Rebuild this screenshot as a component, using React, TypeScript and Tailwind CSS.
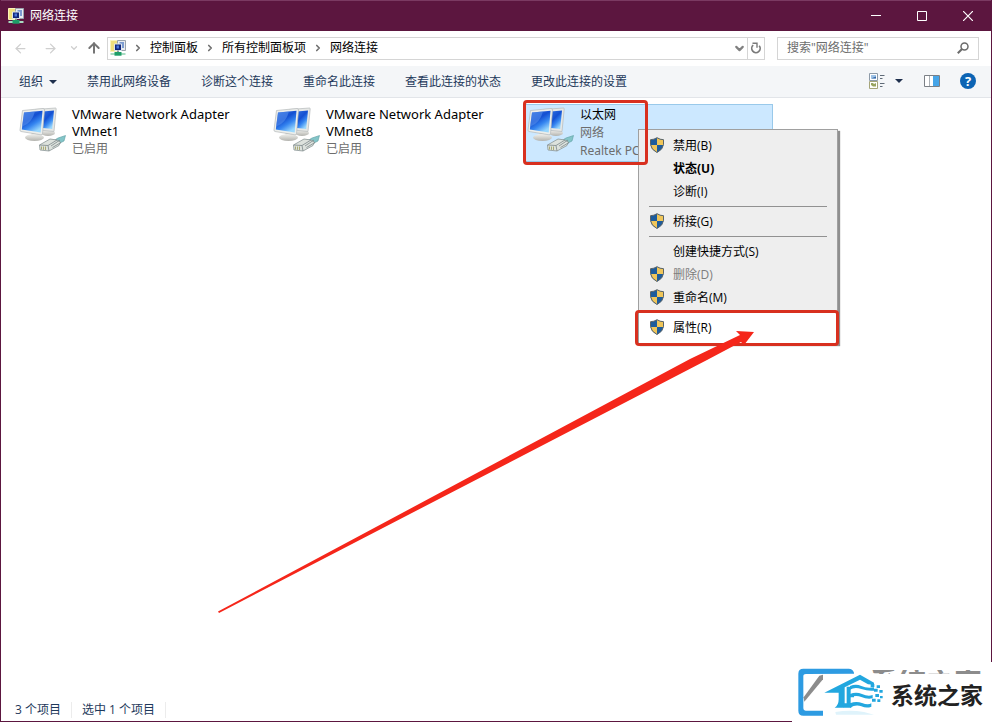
import { Fragment, type ReactNode } from 'react'
import { ArrowLeft, ArrowRight, ArrowUp, ChevronDown, ChevronRight } from 'lucide-react'

interface Connection {
  title: string[]
  details: string[]
}

interface MenuEntry {
  label: string
  shield?: boolean
  bold?: boolean
  disabled?: boolean
}

const CRUMBS = ['控制面板', '所有控制面板项', '网络连接']

const COMMANDS = [
  '禁用此网络设备',
  '诊断这个连接',
  '重命名此连接',
  '查看此连接的状态',
  '更改此连接的设置',
]

const CONNECTIONS: Connection[] = [
  { title: ['VMware Network Adapter', 'VMnet1'], details: ['已启用'] },
  { title: ['VMware Network Adapter', 'VMnet8'], details: ['已启用'] },
]

const MENU_GROUPS: MenuEntry[][] = [
  [
    { label: '禁用(B)', shield: true },
    { label: '状态(U)', bold: true },
    { label: '诊断(I)' },
  ],
  [{ label: '桥接(G)', shield: true }],
  [
    { label: '创建快捷方式(S)' },
    { label: '删除(D)', shield: true, disabled: true },
    { label: '重命名(M)', shield: true },
  ],
]

function NetworkIcon(): ReactNode {
  return (
    <svg viewBox="0 0 16 16" className="w-4 h-4 shrink-0" aria-hidden="true">
      <path d="M0.5 0.5h7v11h-7z" fill="#f1df7c" stroke="#fbf3bb" />
      <path d="M7.5 0.5h8v10h-8z" fill="#e9ecf0" stroke="#9aa3ad" />
      <path d="M9.500 2h4.500v6h-4.500z" fill="#7c9bd0" />
      <path d="M4.500 4h7v6.500h-7z" fill="#12267a" stroke="#dfe6ee" />
      <path d="M6.500 5.500h2.500v3h-2.500z" fill="#4a74d8" />
      <path d="M7 10.500h2v2h-2z" fill="#8c959c" />
      <path d="M0.500 14h15" stroke="#a8dcc2" strokeWidth="2" />
      <path d="M4.500 12h7v3.700h-7z" fill="#1e9e68" />
    </svg>
  )
}

/** Two monitors with an RJ45 plug in front of them. */
function ConnectionIcon(): ReactNode {
  return (
    <svg viewBox="0 0 48 48" className="w-12 h-12 shrink-0" aria-hidden="true">
      <defs>
        <linearGradient id="screen" x1="0" y1="0" x2="0.6" y2="1">
          <stop offset="0" stopColor="#2f6fe0" />
          <stop offset="0.45" stopColor="#1450d2" />
          <stop offset="0.7" stopColor="#3585f0" />
          <stop offset="1" stopColor="#9ad8fd" />
        </linearGradient>
        <linearGradient id="stand" x1="0" y1="0" x2="0" y2="1">
          <stop offset="0" stopColor="#f2f2ee" />
          <stop offset="1" stopColor="#b3b3ae" />
        </linearGradient>
      </defs>
      <ellipse cx="29" cy="27" rx="7" ry="3" fill="url(#stand)" />
      <path d="M16 3.500 36.500 2Q37.300 2 37.200 3L35 25.500 20 24z" fill="#e6e8e6" stroke="#b4b9ba" strokeWidth="0.700" />
      <path d="M24 5.500 35 4.500 33.200 23 24 22z" fill="url(#screen)" />
      <path d="M13 25 20 26 19 32H12z" fill="#d0d0cc" />
      <ellipse cx="15.500" cy="31.500" rx="9.500" ry="3.500" fill="url(#stand)" />
      <path d="M3.500 4.500 24 2.500Q25.500 2.500 25.500 4L23.500 28Q23.300 29 22 28.800L2 25.500Q0.800 25.200 1 24z" fill="#eceeeb" stroke="#b4b9ba" strokeWidth="0.700" />
      <path d="M5 6.500 23.500 4.700 21.700 26.500 2.800 23.500z" fill="url(#screen)" />
      <path d="M5 6.500 16 5.400Q13 17 3.200 20.500z" fill="#5b93ec" opacity="0.550" />
      <path d="M34 35 39 32 46.500 29.500 45 35 39 38z" fill="#83c5c8" stroke="#5c9da3" strokeWidth="0.600" />
      <path d="M20.500 39 31 33 38 34 41.500 36 40 39.500 30 45 21 44z" fill="#dde2dd" stroke="#8a9596" strokeWidth="0.800" />
      <path d="M20.500 39 29 39.500 30 45M29 39.500 38 34M32 40 41 34M33.500 41.500 42 36.500" fill="none" stroke="#7c888a" strokeWidth="0.800" />
      <path d="M22.500 40.500v3M24.500 40.500v3.300M26.500 40.500v3.500" stroke="#a3a46a" strokeWidth="0.900" />
    </svg>
  )
}

function ShieldIcon(): ReactNode {
  return (
    <svg viewBox="0 0 16 16" className="w-4 h-4" aria-hidden="true">
      <path d="M8 0.700Q11 2.700 14.500 2.700V7.500Q14 12.500 8 15.500Q2 12.500 1.500 7.500V2.700Q5 2.700 8 0.700z" fill="#1d5c9c" />
      <path d="M8 0.700Q11 2.700 14.500 2.700V8H8z" fill="#f0c659" />
      <path d="M1.500 8H8V15.500Q2.500 12.700 1.500 8z" fill="#f0c659" />
      <path d="M8 0.700Q11 2.700 14.500 2.700V7.500Q14 12.500 8 15.500Q2 12.500 1.500 7.500V2.700Q5 2.700 8 0.700z" fill="none" stroke="#5b6468" />
    </svg>
  )
}

function Caret(): ReactNode {
  return (
    <svg viewBox="0 0 8 4" className="w-2 h-1" aria-hidden="true">
      <path d="M0 0h8L4 4z" fill="#1e2f4d" />
    </svg>
  )
}

function TitleBar(): ReactNode {
  return (
    <header className="flex items-center h-[31px] pl-[7px] bg-[#5c163f] border-t border-[#7b3a62] text-white">
      <NetworkIcon />
      <h1 className="flex-1 pl-1.5 text-xs">网络连接</h1>
      <button type="button" aria-label="最小化" className="w-[46px] h-[30px] flex items-center justify-center">
        <svg viewBox="0 0 10 10" className="w-2.5 h-2.5"><path d="M0 4.500h10" stroke="white" /></svg>
      </button>
      <button type="button" aria-label="最大化" className="w-[46px] h-[30px] flex items-center justify-center">
        <svg viewBox="0 0 10 10" className="w-2.5 h-2.5"><path d="M0.500 0.500h9v9h-9z" fill="none" stroke="white" /></svg>
      </button>
      <button type="button" aria-label="关闭" className="w-[46px] h-[30px] flex items-center justify-center">
        <svg viewBox="0 0 10 10" className="w-2.5 h-2.5"><path d="M0 0 10 10M10 0 0 10" stroke="white" strokeWidth="1.200" /></svg>
      </button>
    </header>
  )
}

function AddressRow(): ReactNode {
  return (
    <div className="flex items-center h-[35px] pr-3 pb-px">
      <nav className="flex items-center w-[106px] shrink-0 pl-3 text-[#cfcfcf]" aria-label="导航">
        <button type="button" aria-label="后退" className="w-[30px]"><ArrowLeft className="w-[15px] h-[15px]" strokeWidth={2} /></button>
        <button type="button" aria-label="前进" className="w-[26px]"><ArrowRight className="w-[15px] h-[15px]" strokeWidth={2} /></button>
        <button type="button" aria-label="最近位置" className="w-[17px]"><ChevronDown className="w-2.5 h-2.5" strokeWidth={3} /></button>
        <button type="button" aria-label="上移" className="text-[#757575]"><ArrowUp className="w-4 h-4" strokeWidth={3} /></button>
      </nav>
      <div className="flex flex-1 items-center h-[23px] border border-[#d5d5d5] pl-0.5">
        <NetworkIcon />
        <ol className="flex flex-1 items-center text-black">
          {CRUMBS.map((crumb) => (
            <li key={crumb} className="flex items-center">
              <span className="w-6 flex justify-center">
                <ChevronRight className="w-2.5 h-2.5 text-[#6f6f6f]" strokeWidth={4} />
              </span>
              <a href="#" className="pb-px">{crumb}</a>
            </li>
          ))}
        </ol>
        <button type="button" aria-label="历史记录" className="w-[15px] flex justify-center text-[#808080]">
          <ChevronDown className="w-[13px] h-[13px]" strokeWidth={4} />
        </button>
        <button type="button" aria-label="刷新" className="w-[17px] h-full border-l border-[#d5d5d5] flex items-center justify-center">
          <svg viewBox="0 0 12 12" className="w-3 h-3" aria-hidden="true">
            <path d="M3.200 3.200A4.200 4.200 0 1 0 9.200 3.700" fill="none" stroke="#7a7a7a" strokeWidth="1.700" />
            <path d="M2.500 1.200H7V5.800" fill="none" stroke="#7a7a7a" strokeWidth="1.400" />
          </svg>
        </button>
      </div>
      <form className="flex items-center ml-3 w-[202px] h-[23px] border border-[#d5d5d5] px-[9px]">
        <input
          type="search"
          aria-label="搜索"
          placeholder={'搜索"网络连接"'}
          className="flex-1 min-w-0 outline-none bg-transparent placeholder:text-[#6d6d6d]"
        />
        <svg viewBox="0 0 12 12" className="w-3 h-3" aria-hidden="true">
          <circle cx="7.500" cy="4.500" r="3.500" fill="none" stroke="#6b6b6b" strokeWidth="1.500" />
          <path d="M5 7 0.800 11.200" stroke="#6b6b6b" strokeWidth="2" />
        </svg>
      </form>
    </div>
  )
}

function CommandBar(): ReactNode {
  return (
    <div className="flex items-center h-8 pl-[18px] pr-[15px] bg-[#f4f6f8] border-b border-[#e2e5e9] text-[#1e395b]">
      <div className="flex flex-1 items-center gap-[30px]">
        <button type="button" className="flex items-center gap-1.5">
          组织
          <Caret />
        </button>
        {COMMANDS.map((command) => (
          <button type="button" key={command}>{command}</button>
        ))}
      </div>
      <div className="flex items-center pb-px">
        <button type="button" aria-label="更改视图" className="flex items-center gap-2.5">
          <svg viewBox="0 0 16 16" className="w-4 h-4" aria-hidden="true">
            <path d="M0.500 0.500h8v7h-8z" fill="white" stroke="#8d9aa8" />
            <path d="M0.500 8.500h8v7h-8z" fill="white" stroke="#a5a57a" />
            <path d="M2 2h5v3.500h-5z" fill="#9fc3e6" />
            <path d="M2 5.500 7 3.500v2z" fill="#3166a8" />
            <path d="M2 10h2l1 1 2-1v3.500h-3l-2-1.500z" fill="#98a45f" />
            <path d="M11 2.500h4.500M11 5.500h2.500M11 10.500h4.500M11 13.500h2.500" stroke="#5e6a77" />
          </svg>
          <Caret />
        </button>
        <button type="button" aria-label="预览窗格" className="ml-[21px]">
          <svg viewBox="0 0 16 12" className="w-4 h-3" aria-hidden="true">
            <path d="M0.500 0.500h15v11h-15z" fill="white" stroke="#7b8086" />
            <path d="M9 1h6v10h-6z" fill="#46a5e8" />
            <path d="M5.500 1v10" stroke="#aab0b5" />
          </svg>
        </button>
        <button type="button" aria-label="帮助" className="ml-5 w-4 h-4 rounded-full bg-[#0c64b4] text-white text-[13px] leading-4 font-bold">
          ?
        </button>
      </div>
    </div>
  )
}

function MenuItem({ label, shield, bold, disabled }: MenuEntry): ReactNode {
  return (
    <li>
      <button
        type="button"
        disabled={disabled}
        className="flex items-center gap-2 w-full h-[23px] pl-2.5 text-left text-black disabled:text-[#7d7d7d]"
      >
        <span className="w-4 h-4">{shield && <ShieldIcon />}</span>
        <span className={bold ? 'pt-0.5 font-bold' : 'pt-0.5'}>{label}</span>
      </button>
    </li>
  )
}

function ContextMenu(): ReactNode {
  return (
    <div className="absolute left-[112px] top-6 w-[200px] pt-[3px] bg-[#eeeeee] border border-[#a0a0a0] shadow-[2px_2px_1px_#8f8f8f]">
      {MENU_GROUPS.map((group, i) => (
        <Fragment key={i}>
          {i > 0 && <hr className="mx-2.5 mt-1 mb-0.5 border-[#919191]" />}
          <ul>
            {group.map((entry) => (
              <MenuItem key={entry.label} {...entry} />
            ))}
          </ul>
        </Fragment>
      ))}
      <div className="relative mt-[3px] pt-1 pb-[5px] bg-white">
        <ul>
          <MenuItem label="属性(R)" shield />
        </ul>
        <div className="absolute -left-1 -right-0.5 -top-px -bottom-[3px] border-3 border-[#d8301f] rounded-sm pointer-events-none" />
      </div>
    </div>
  )
}

function ConnectionItem({ title, details }: Connection): ReactNode {
  return (
    <div className="flex gap-[5px] p-px min-h-[58px] border border-transparent">
      <ConnectionIcon />
      <div className="leading-[17px] text-[13px] whitespace-nowrap font-['Noto_Sans','Noto_Sans_CJK_SC',sans-serif]">
        {title.map((line) => (
          <p key={line} className="text-black">{line}</p>
        ))}
        {details.map((line) => (
          <p key={line} className="text-xs leading-[18px] text-[#6d6d6d]">{line}</p>
        ))}
      </div>
    </div>
  )
}

function SelectedConnection(): ReactNode {
  return (
    <div className="relative flex gap-[5px] p-px min-h-[58px] bg-[#cce8ff] border border-[#99c9ea]">
      <ConnectionIcon />
      <div className="text-xs leading-[18px] whitespace-nowrap text-[#6d6d6d] font-['Noto_Sans','Noto_Sans_CJK_SC',sans-serif]">
        <p className="text-black">以太网</p>
        <p>网络</p>
        <p>Realtek PCIe</p>
      </div>
      <ContextMenu />
      <div className="absolute -left-[3px] -top-[5px] w-[125px] h-[65px] border-3 border-[#d8301f] rounded-sm pointer-events-none" />
    </div>
  )
}

function Watermark(): ReactNode {
  return (
    <div className="absolute -right-px -bottom-px w-[200px] h-[60px] bg-white">
      <div className="absolute left-[78px] top-2 h-1 overflow-hidden text-[28px] leading-6 font-bold text-[#8c8c8c] whitespace-nowrap" aria-hidden="true">
        系统之家
      </div>
      <div className="flex items-center pt-1.5 pl-1">
        <svg viewBox="6 18 270 150" className="w-[90px] h-[50px]" aria-hidden="true">
          <path d="M180 35V32Q176 20 164 20H28Q13 20 13 35V146Q13 161 28 161H87V146H35Q28 146 28 139V43Q28 36 36 36z" fill="#2d9be2" />
          <path d="M29 106 76 41 87 38V52L31 119z" fill="#8c8c8c" />
          <path d="M91 92 198 38 240 62 240 68 222 67 198 53 152 76V126Q152 137 144 137H122Q134 130 134 112V92z" fill="#22a7df" />
          <path d="M158 74H170V134H158zM146 124H172V137H146zM158 96H180V106H158z" fill="#22a7df" />
          <path d="M168 72Q186 64 202 72T240 76V86Q222 88 202 81T168 83z" fill="#22a7df" />
          <path d="M168 96Q186 88 204 96T236 99V109Q218 112 202 105T168 106z" fill="#22a7df" />
          <path d="M168 124Q186 116 204 123T232 124V134Q218 140 202 133T168 137z" fill="#22a7df" />
          <path d="M230 66h11v9h-11zM248 70h10v8h-10zM240 80h11v9h-11zM256 84h10v8h-10zM244 96h11v9h-11zM258 102h8v7h-8zM234 110h11v9h-11zM250 112h9v8h-9z" fill="#22a7df" />
          <path d="M124 150Q168 142 210 150L240 158H126z" fill="#dff3fb" />
        </svg>
        <strong className="ml-[5px] mt-1 text-[23px] leading-8 text-[#222222] whitespace-nowrap">系统之家</strong>
      </div>
    </div>
  )
}

export default function App(): ReactNode {
  return (
    <div className="relative flex flex-col min-h-screen bg-white border-x border-b border-[#5c163f] text-xs font-['Open_Sans','Noto_Sans_CJK_SC',sans-serif]">
      <TitleBar />
      <AddressRow />
      <CommandBar />
      <main className="relative flex-1 px-4 pt-1.5">
        <div className="grid grid-cols-[repeat(auto-fill,248px)] gap-1.5">
          {CONNECTIONS.map((connection) => (
            <ConnectionItem key={connection.title[1]} {...connection} />
          ))}
          <SelectedConnection />
        </div>
        <svg viewBox="217 330 538 284" className="absolute left-[216px] top-[232px] w-[538px] h-[284px] pointer-events-none" aria-hidden="true">
          <path d="M218 611.500 690 359 740 335 736 331 754 332 744 345 741 342 707 360 219 613z" fill="#f5261a" />
        </svg>
      </main>
      <footer className="flex items-center h-6 pt-0.5 pl-3.5 text-[#1e395b]">
        <span className="pr-2.5 border-r border-[#ececec]">3 个项目</span>
        <span className="px-2.5 border-r border-[#ececec]">选中 1 个项目</span>
      </footer>
      <Watermark />
    </div>
  )
}
